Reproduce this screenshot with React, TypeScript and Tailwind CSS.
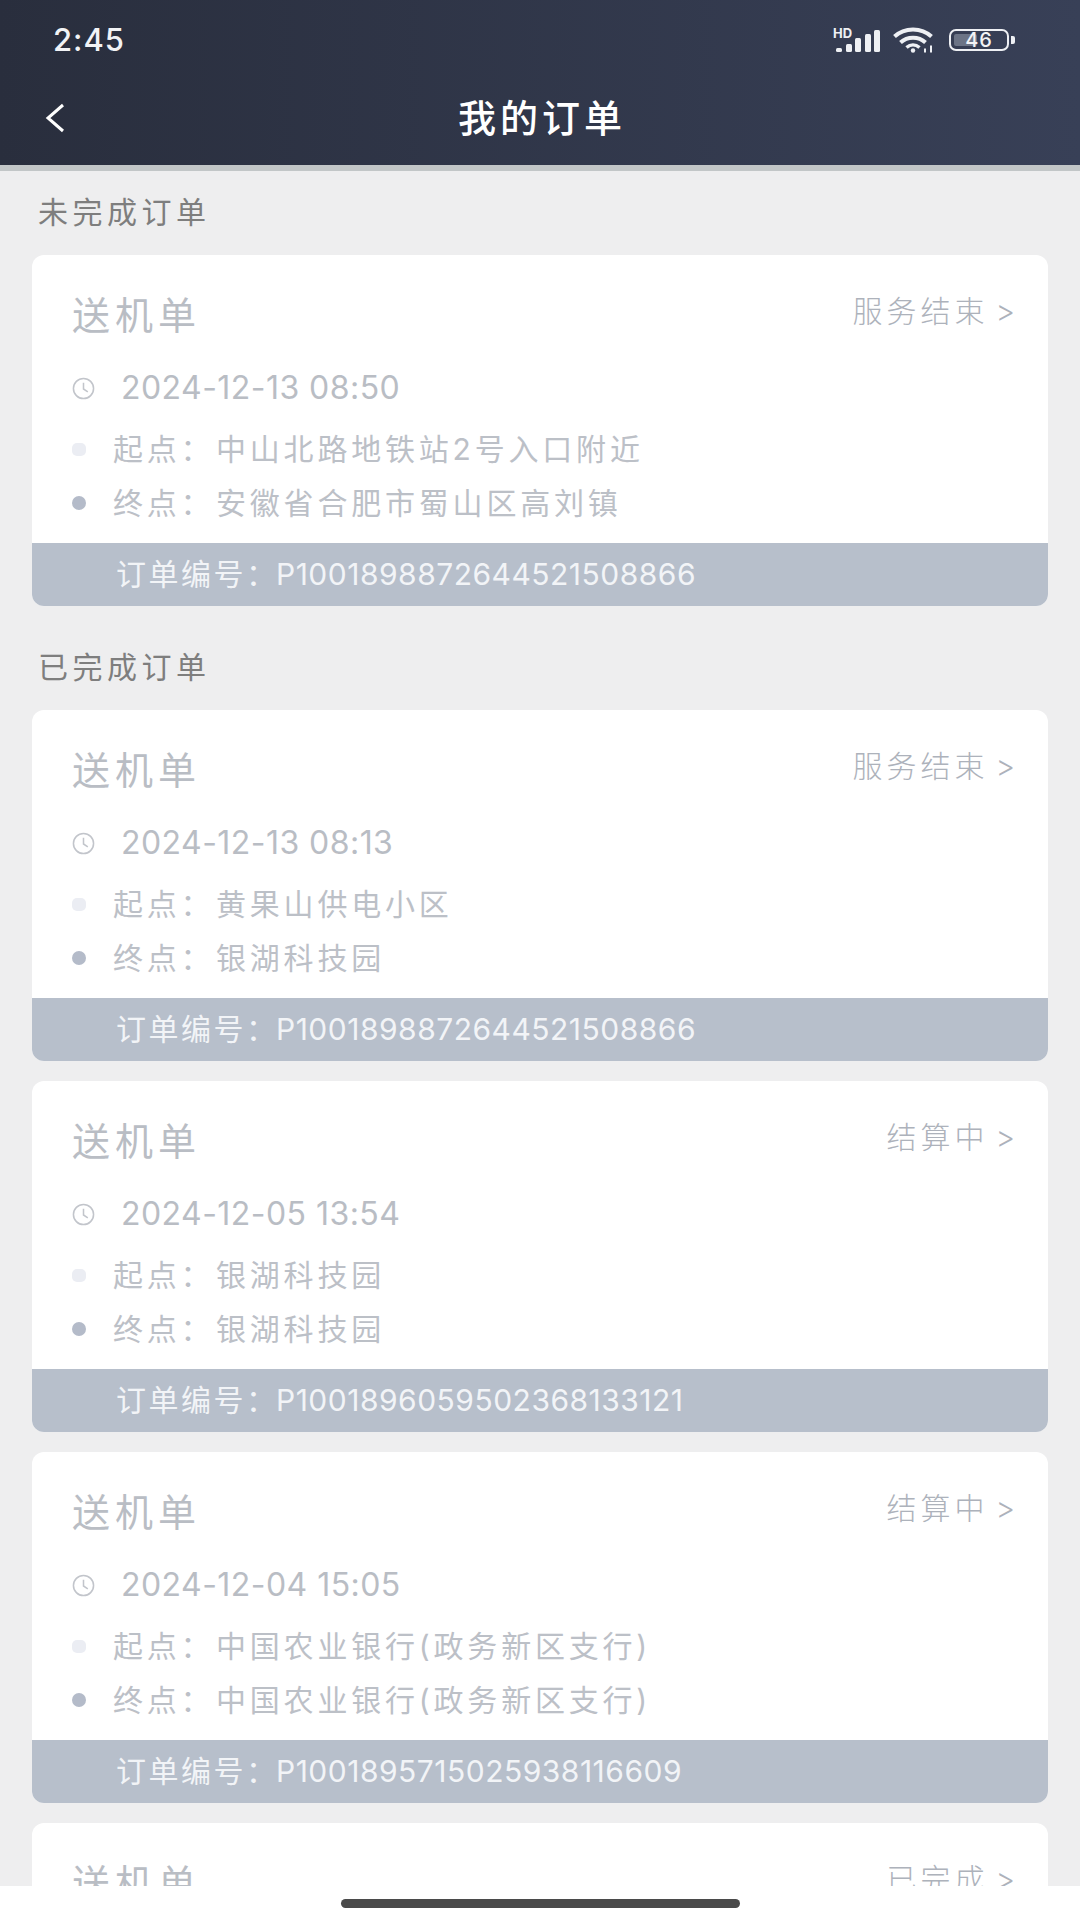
import React from "react";

type Order = {
  status: string;
  time?: string;
  from?: string;
  to?: string;
  no?: string;
};

const pendingOrders: Order[] = [
  {
    status: "服务结束",
    time: "2024-12-13 08:50",
    from: "中山北路地铁站2号入口附近",
    to: "安徽省合肥市蜀山区高刘镇",
    no: "P1001898872644521508866",
  },
];

const doneOrders: Order[] = [
  {
    status: "服务结束",
    time: "2024-12-13 08:13",
    from: "黄果山供电小区",
    to: "银湖科技园",
    no: "P1001898872644521508866",
  },
  {
    status: "结算中",
    time: "2024-12-05 13:54",
    from: "银湖科技园",
    to: "银湖科技园",
    no: "P1001896059502368133121",
  },
  {
    status: "结算中",
    time: "2024-12-04 15:05",
    from: "中国农业银行(政务新区支行)",
    to: "中国农业银行(政务新区支行)",
    no: "P1001895715025938116609",
  },
  // 最后一张被底部手势条挡住，只露出标题
  { status: "已完成" },
];

const cjk = "font-['Inter','Noto_Sans_CJK_SC',sans-serif]";

function StatusIcons() {
  return (
    <div className="flex items-center">
      {/* 信号 */}
      <svg width="47" height="26" viewBox="0 0 47 26" fill="#eef0f4">
        <text x="0" y="11" fontSize="13" fontWeight="700" fontFamily="Inter, sans-serif">HD</text>
        <rect x="3" y="21" width="6" height="4" rx="1.5" />
        <rect x="13" y="17" width="6" height="8" rx="1.5" />
        <rect x="22" y="11" width="6" height="14" rx="1.5" />
        <rect x="32" y="7" width="6" height="18" rx="1.5" />
        <rect x="41" y="3" width="6" height="22" rx="1.5" />
      </svg>
      {/* wifi */}
      <svg width="43" height="26" viewBox="0 0 43 26" fill="none" stroke="#eef0f4" strokeWidth="4" className="ml-[13px]">
        <path d="M1.5 9.5C11.5 0 28.5 0 38.5 9.5" />
        <path d="M7.5 15.5C14.5 9 25.5 9 32.5 15.5" />
        <path d="M13.5 20.5C17.5 17 22.5 17 26.5 20.5" strokeWidth="3.5" />
        <circle cx="20" cy="23.5" r="2.2" fill="#eef0f4" stroke="none" />
        <path d="M32 25.5v-4M38 25.5v-7" strokeWidth="2" />
      </svg>
      {/* 电量 */}
      <div className="ml-[13px] w-[60px] h-[22px] rounded-[7px] border-[2px] border-[#eef0f4] relative flex items-center justify-center overflow-hidden">
        <div className="absolute left-[3px] top-[3px] bottom-[3px] w-[23px] rounded-[2px] bg-[#6c7486]" />
        <span className="relative text-[20px] leading-none font-medium text-[#f2f3f6] font-['Inter',sans-serif] tracking-[1px]">46</span>
      </div>
      <div className="ml-[2px] w-[4px] h-[8px] rounded-r-[2px] bg-[#eef0f4]" />
    </div>
  );
}

function OrderCard({ order }: { order: Order }) {
  return (
    <div className={`mx-[32px] h-[351px] bg-white rounded-[12px] overflow-hidden flex flex-col ${cjk}`}>
      <div className="h-[288px] pt-[40px] pl-[40px] pr-[33px]">
        <div className="flex justify-between items-start">
          <span className="h-[40px] leading-[40px] text-[38px] tracking-[5px] text-[#b9bdc4]">送机单</span>
          <span className="h-[32px] leading-[32px] text-[30px] tracking-[4px] text-[#adb2bb] font-light whitespace-nowrap">
            {order.status}<span className="ml-[7px] tracking-normal">&gt;</span>
          </span>
        </div>
        {order.time && (
          <>
            <div className="mt-[38px] h-[30px] flex items-center">
              <svg width="23" height="23" viewBox="0 0 24 24" fill="none" stroke="#c2c5cb" strokeWidth="1.6">
                <circle cx="12" cy="12" r="10.5" />
                <path d="M12 6v6.5l4.5 3" />
              </svg>
              <span className="ml-[26px] text-[32px] leading-[30px] tracking-[0.45px] text-[#b9bdc4] font-['Inter',sans-serif]">
                {order.time}
              </span>
            </div>
            <div className="mt-[26px] h-[40px] flex items-center text-[30px] tracking-[3.8px] text-[#bcc0c7]">
              <span className="w-[14px] h-[13px] rounded-[5px] bg-[#ebedf3]" />
              <span className="ml-[27px] w-[103px] shrink-0 whitespace-nowrap">起点：</span>
              <span className="whitespace-nowrap">{order.from}</span>
            </div>
            <div className="mt-[14px] h-[40px] flex items-center text-[30px] tracking-[3.8px] text-[#bcc0c7]">
              <span className="w-[14px] h-[14px] rounded-full bg-[#b4bbc9]" />
              <span className="ml-[27px] w-[103px] shrink-0 whitespace-nowrap">终点：</span>
              <span className="whitespace-nowrap">{order.to}</span>
            </div>
          </>
        )}
      </div>
      <div className="h-[63px] bg-[#b7bfcb] pl-[84px] flex items-center text-[30px] text-[#f2f4f7]">
        <span className="w-[160px] shrink-0 whitespace-nowrap tracking-[2.5px]">{order.no && "订单编号："}</span>
        <span className="tracking-[0.5px]">{order.no}</span>
      </div>
    </div>
  );
}

function SectionTitle({ children }: { children: React.ReactNode }) {
  return (
    <div className={`h-[40px] mb-[23px] pl-[38px] flex items-center text-[30px] tracking-[4.5px] text-[#7e7e7e] ${cjk}`}>
      {children}
    </div>
  );
}

export default function App() {
  return (
    <div className="relative w-[1080px] h-[1920px] overflow-hidden bg-[#eeeeef]">
      {/* 顶部导航 */}
      <div className="h-[165px] bg-gradient-to-r from-[#292e3d] to-[#384057] shadow-[0_6px_0_#c2c6c7] pt-[20px]">
        <div className="h-[40px] pl-[53px] pr-[65px] flex items-center justify-between">
          <span className="text-[31px] tracking-[1px] font-medium text-[#f2f3f6] font-['Inter',sans-serif]">2:45</span>
          <StatusIcons />
        </div>
        <div className="relative mt-[36px] h-[44px] pl-[4px] flex items-center justify-center">
          <svg width="22" height="30" viewBox="0 0 22 30" fill="none" stroke="#fff" strokeWidth="3" className="absolute left-[44px]">
            <path d="M19 2 4 15l15 13" />
          </svg>
          <span className={`text-[38px] tracking-[4px] font-medium text-white ${cjk}`}>我的订单</span>
        </div>
      </div>

      <div className="pt-[27px]">
        <SectionTitle>未完成订单</SectionTitle>
        {pendingOrders.map((o, i) => (
          <OrderCard key={i} order={o} />
        ))}
      </div>

      <div className="pt-[41px]">
        <SectionTitle>已完成订单</SectionTitle>
        <div className="flex flex-col gap-[20px]">
          {doneOrders.map((o, i) => (
            <OrderCard key={i} order={o} />
          ))}
        </div>
      </div>

      {/* 底部手势条 */}
      <div className="absolute left-0 right-0 bottom-0 h-[34px] bg-white flex justify-center pt-[13px]">
        <div className="w-[399px] h-[9px] rounded-full bg-[#4a4a4a]" />
      </div>
    </div>
  );
}
